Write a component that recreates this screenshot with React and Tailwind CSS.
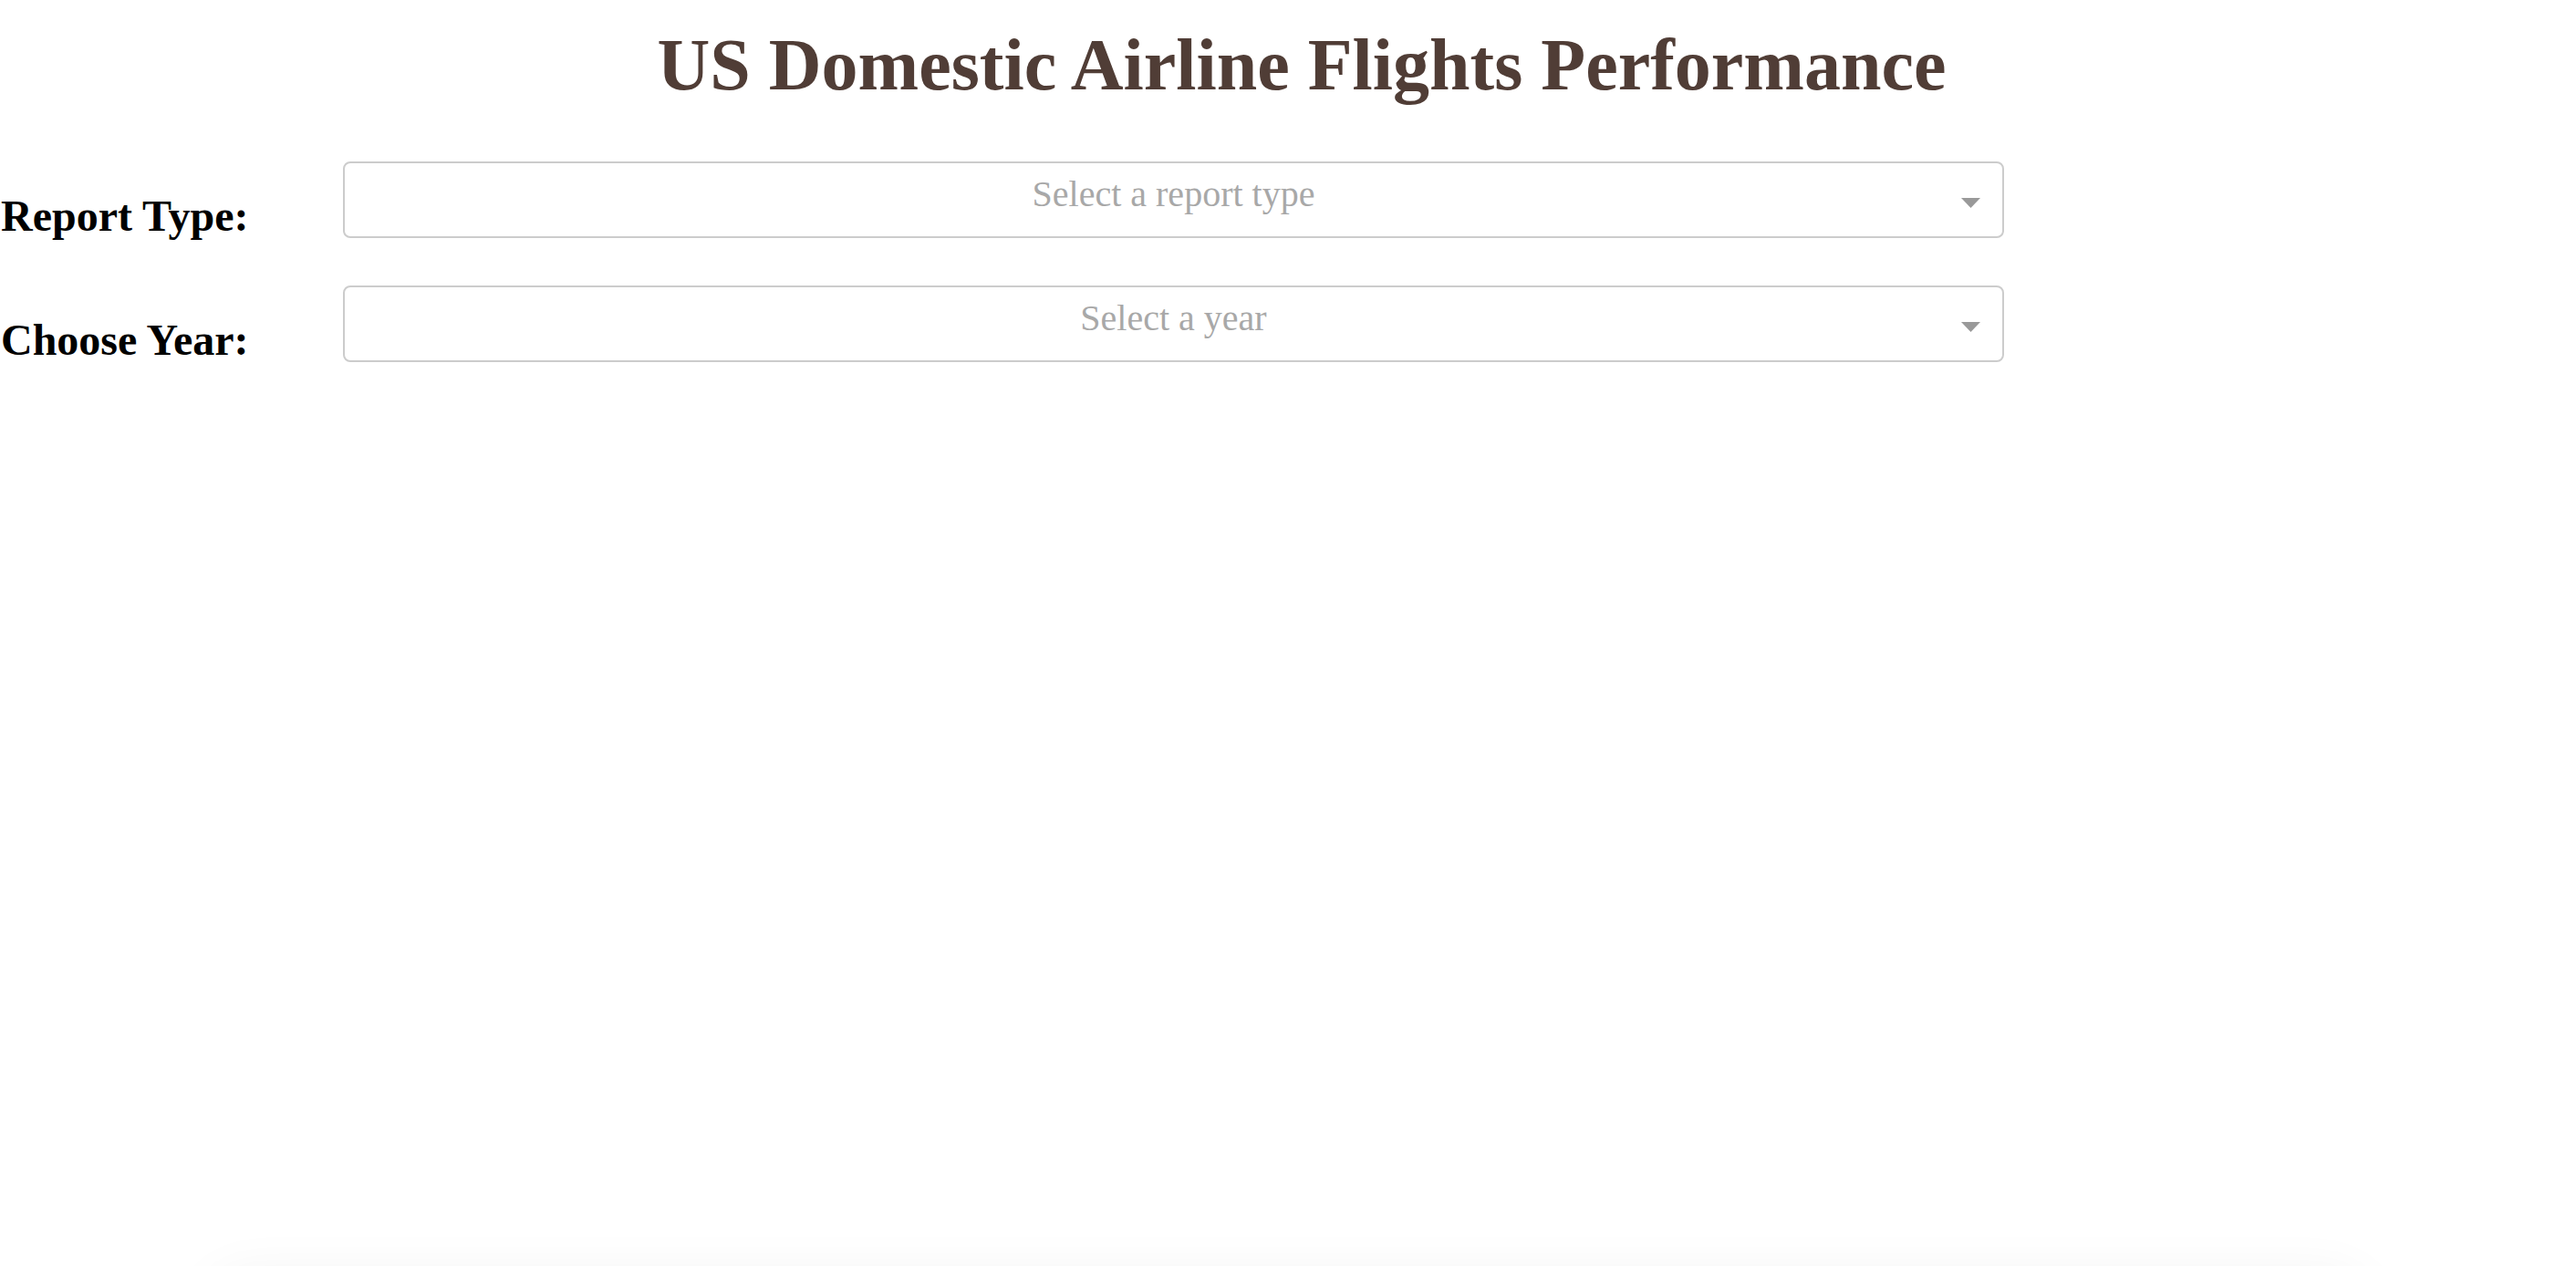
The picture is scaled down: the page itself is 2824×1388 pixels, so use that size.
import React from 'react';

const serif = { fontFamily: '"Liberation Serif", "Times New Roman", serif' };

function Dropdown({ placeholder }) {
  return (
    <div className="flex w-[1821px] h-[84px] rounded-[8px] border-2 border-[#cccccc] bg-white">
      <div className="w-[70px] shrink-0" />
      <div className="flex-1 pt-[11px] text-center text-[40px] leading-[46px] text-[#a8a8a8]">
        {placeholder}
      </div>
      <div className="w-[70px] shrink-0 flex justify-center pt-[38px]">
        <svg width="21" height="11" viewBox="0 0 21 11">
          <polygon points="0,0 21,0 10.5,11" fill="#999999" />
        </svg>
      </div>
    </div>
  );
}

function FilterRow({ label, placeholder, className }) {
  return (
    <div className={`flex items-start ${className}`}>
      <h2 className="w-[376px] shrink-0 mt-[38px] text-[48px] leading-[44px] font-bold text-black pl-[1px]">
        {label}
      </h2>
      <Dropdown placeholder={placeholder} />
    </div>
  );
}

export default function App() {
  return (
    <div className="min-h-screen bg-white overflow-hidden" style={serif}>
      {/* Title */}
      <h1 className="pt-[27px] pl-[30px] text-center text-[80px] leading-[89px] font-bold text-[#503D36]">
        US Domestic Airline Flights Performance
      </h1>

      {/* Filters */}
      <FilterRow label="Report Type:" placeholder="Select a report type" className="mt-[61px]" />
      <FilterRow label="Choose Year:" placeholder="Select a year" className="mt-[52px]" />

      {/* chart area below the fold */}
      <div className="mt-[1002px] mx-[230px] h-[400px] rounded-[40px] bg-white shadow-[0_0_60px_rgba(0,0,0,0.06)]" />
    </div>
  );
}
